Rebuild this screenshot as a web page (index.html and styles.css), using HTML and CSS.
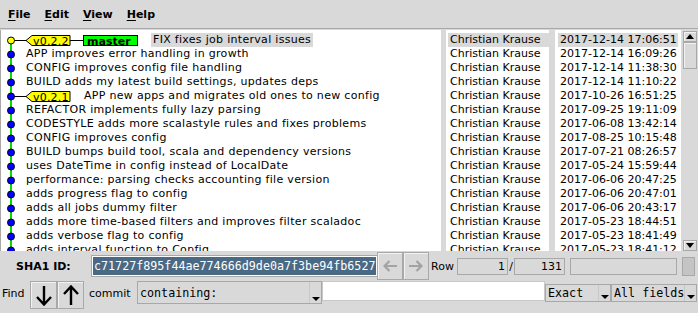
FILE: index.html
```html
<!DOCTYPE html>
<html lang="en">
<head>
    <meta charset="UTF-8">
    <title>gitk: jobs</title>
    <link rel="stylesheet" href="styles.css">
</head>
<body>
    <div class="menubar">
        <span class="menu"><u>F</u>ile</span>
        <span class="menu"><u>E</u>dit</span>
        <span class="menu"><u>V</u>iew</span>
        <span class="menu"><u>H</u>elp</span>
    </div>

    <div class="main">
        <section class="pane graph-pane">
            <div class="row">
                <svg class="graph" width="149" height="14">
                    <rect class="edge" x="9" y="7" width="2" height="7"/>
                    <line class="link" x1="13" y1="7.5" x2="26" y2="7.5"/>
                    <polygon class="tag" points="25,7.5 31,2.5 69,2.5 69,12.5 31,12.5"/>
                    <text class="tag-text" x="32" y="11.5">v0.2.2</text>
                    <line class="link" x1="69" y1="7.5" x2="83" y2="7.5"/>
                    <rect class="head" x="82.5" y="2.5" width="54" height="10"/>
                    <text class="head-text" x="86" y="11.5">master</text>
                    <circle class="dot current" cx="10" cy="7.5" r="3.5"/>
                </svg>
                <span class="msg selected">FIX fixes job interval issues</span>
            </div>
            <div class="row"><svg class="graph" width="24" height="14"><rect class="edge" x="9" y="0" width="2" height="14"/><circle class="dot" cx="10" cy="7.5" r="3.5"/></svg><span class="msg">APP improves error handling in growth</span></div>
            <div class="row"><svg class="graph" width="24" height="14"><rect class="edge" x="9" y="0" width="2" height="14"/><circle class="dot" cx="10" cy="7.5" r="3.5"/></svg><span class="msg">CONFIG improves config file handling</span></div>
            <div class="row"><svg class="graph" width="24" height="14"><rect class="edge" x="9" y="0" width="2" height="14"/><circle class="dot" cx="10" cy="7.5" r="3.5"/></svg><span class="msg">BUILD adds my latest build settings, updates deps</span></div>
            <div class="row">
                <svg class="graph" width="82" height="14">
                    <rect class="edge" x="9" y="0" width="2" height="14"/>
                    <line class="link" x1="13" y1="7.5" x2="26" y2="7.5"/>
                    <polygon class="tag" points="25,7.5 31,2.5 69,2.5 69,12.5 31,12.5"/>
                    <text class="tag-text" x="32" y="11.5">v0.2.1</text>
                    <circle class="dot" cx="10" cy="7.5" r="3.5"/>
                </svg>
                <span class="msg">APP new apps and migrates old ones to new config</span>
            </div>
            <div class="row"><svg class="graph" width="24" height="14"><rect class="edge" x="9" y="0" width="2" height="14"/><circle class="dot" cx="10" cy="7.5" r="3.5"/></svg><span class="msg">REFACTOR implements fully lazy parsing</span></div>
            <div class="row"><svg class="graph" width="24" height="14"><rect class="edge" x="9" y="0" width="2" height="14"/><circle class="dot" cx="10" cy="7.5" r="3.5"/></svg><span class="msg">CODESTYLE adds more scalastyle rules and fixes problems</span></div>
            <div class="row"><svg class="graph" width="24" height="14"><rect class="edge" x="9" y="0" width="2" height="14"/><circle class="dot" cx="10" cy="7.5" r="3.5"/></svg><span class="msg">CONFIG improves config</span></div>
            <div class="row"><svg class="graph" width="24" height="14"><rect class="edge" x="9" y="0" width="2" height="14"/><circle class="dot" cx="10" cy="7.5" r="3.5"/></svg><span class="msg">BUILD bumps build tool, scala and dependency versions</span></div>
            <div class="row"><svg class="graph" width="24" height="14"><rect class="edge" x="9" y="0" width="2" height="14"/><circle class="dot" cx="10" cy="7.5" r="3.5"/></svg><span class="msg">uses DateTime in config instead of LocalDate</span></div>
            <div class="row"><svg class="graph" width="24" height="14"><rect class="edge" x="9" y="0" width="2" height="14"/><circle class="dot" cx="10" cy="7.5" r="3.5"/></svg><span class="msg">performance: parsing checks accounting file version</span></div>
            <div class="row"><svg class="graph" width="24" height="14"><rect class="edge" x="9" y="0" width="2" height="14"/><circle class="dot" cx="10" cy="7.5" r="3.5"/></svg><span class="msg">adds progress flag to config</span></div>
            <div class="row"><svg class="graph" width="24" height="14"><rect class="edge" x="9" y="0" width="2" height="14"/><circle class="dot" cx="10" cy="7.5" r="3.5"/></svg><span class="msg">adds all jobs dummy filter</span></div>
            <div class="row"><svg class="graph" width="24" height="14"><rect class="edge" x="9" y="0" width="2" height="14"/><circle class="dot" cx="10" cy="7.5" r="3.5"/></svg><span class="msg">adds more time-based filters and improves filter scaladoc</span></div>
            <div class="row"><svg class="graph" width="24" height="14"><rect class="edge" x="9" y="0" width="2" height="14"/><circle class="dot" cx="10" cy="7.5" r="3.5"/></svg><span class="msg">adds verbose flag to config</span></div>
            <div class="row"><svg class="graph" width="24" height="14"><rect class="edge" x="9" y="0" width="2" height="14"/><circle class="dot" cx="10" cy="7.5" r="3.5"/></svg><span class="msg">adds interval function to Config</span></div>
        </section>

        <section class="pane author-pane">
            <div class="row"><span class="cell selected">Christian Krause</span></div>
            <div class="row"><span class="cell">Christian Krause</span></div>
            <div class="row"><span class="cell">Christian Krause</span></div>
            <div class="row"><span class="cell">Christian Krause</span></div>
            <div class="row"><span class="cell">Christian Krause</span></div>
            <div class="row"><span class="cell">Christian Krause</span></div>
            <div class="row"><span class="cell">Christian Krause</span></div>
            <div class="row"><span class="cell">Christian Krause</span></div>
            <div class="row"><span class="cell">Christian Krause</span></div>
            <div class="row"><span class="cell">Christian Krause</span></div>
            <div class="row"><span class="cell">Christian Krause</span></div>
            <div class="row"><span class="cell">Christian Krause</span></div>
            <div class="row"><span class="cell">Christian Krause</span></div>
            <div class="row"><span class="cell">Christian Krause</span></div>
            <div class="row"><span class="cell">Christian Krause</span></div>
            <div class="row"><span class="cell">Christian Krause</span></div>
        </section>

        <section class="pane date-pane">
            <div class="row"><span class="cell selected">2017-12-14 17:06:51</span></div>
            <div class="row"><span class="cell">2017-12-14 16:09:26</span></div>
            <div class="row"><span class="cell">2017-12-14 11:38:30</span></div>
            <div class="row"><span class="cell">2017-12-14 11:10:22</span></div>
            <div class="row"><span class="cell">2017-10-26 16:51:25</span></div>
            <div class="row"><span class="cell">2017-09-25 19:11:09</span></div>
            <div class="row"><span class="cell">2017-06-08 13:42:14</span></div>
            <div class="row"><span class="cell">2017-08-25 10:15:48</span></div>
            <div class="row"><span class="cell">2017-07-21 08:26:57</span></div>
            <div class="row"><span class="cell">2017-05-24 15:59:44</span></div>
            <div class="row"><span class="cell">2017-06-06 20:47:25</span></div>
            <div class="row"><span class="cell">2017-06-06 20:47:01</span></div>
            <div class="row"><span class="cell">2017-06-06 20:43:17</span></div>
            <div class="row"><span class="cell">2017-05-23 18:44:51</span></div>
            <div class="row"><span class="cell">2017-05-23 18:41:49</span></div>
            <div class="row"><span class="cell">2017-05-23 18:41:12</span></div>
        </section>

        <div class="scrollbar">
            <div class="sb-btn"><svg width="8" height="5"><polygon points="0,5 4,0 8,5"/></svg></div>
            <div class="sb-trough"><div class="sb-thumb"></div></div>
            <div class="sb-btn"><svg width="8" height="5"><polygon points="0,0 8,0 4,5"/></svg></div>
        </div>
    </div>

    <div class="idbar">
        <span class="idlabel">SHA1 ID:</span>
        <div class="sha-entry"><span class="sha-text">c71727f895f44ae774666d9de0a7f3be94fb6527</span></div>
        <button class="nav" disabled>
            <svg width="16" height="12"><path d="M15 6H2.5M7.5 1L2.5 6l5 5" fill="none" stroke="#a3a3a3" stroke-width="2.2"/></svg>
        </button>
        <button class="nav" disabled>
            <svg width="16" height="12"><path d="M1 6h12.5M8.5 1l5 5-5 5" fill="none" stroke="#a3a3a3" stroke-width="2.2"/></svg>
        </button>
        <span class="rowlabel">Row</span>
        <div class="num">1</div>
        <span class="slash">/</span>
        <div class="num">131</div>
        <div class="status"></div>
        <div class="stub"></div>
    </div>

    <div class="findbar">
        <span class="findlabel">Find</span>
        <button class="fbtn">
            <svg width="18" height="21"><path d="M9 1v18.5M2 12l7 7.5 7-7.5" fill="none" stroke="#000" stroke-width="2.4"/></svg>
        </button>
        <button class="fbtn">
            <svg width="18" height="21"><path d="M9 20V1.5M2 9l7-7.5 7 7.5" fill="none" stroke="#000" stroke-width="2.4"/></svg>
        </button>
        <span class="commitlabel">commit</span>
        <div class="combo combo-type"><span class="combo-text">containing:</span><span class="combo-arrow"></span></div>
        <div class="find-entry"></div>
        <div class="combo combo-exact"><span class="combo-text">Exact</span><span class="combo-arrow"></span></div>
        <div class="combo combo-fields"><span class="combo-text">All fields</span><span class="combo-arrow"></span></div>
    </div>
</body>
</html>
```

FILE: styles.css
```css
* { margin: 0; padding: 0; box-sizing: border-box; }
body {
    font: 11px "DejaVu Sans", sans-serif;
    color: #000;
    background: #d9d9d9;
    width: 698px;
    height: 313px;
    overflow: hidden;
}
button { font: inherit; }

/* menu */
.menubar{
    height: 28px;
    display: flex;
    align-items: center;
    padding-left: 8px;
    gap: 14px;
    font-weight: bold;
}
.menu u{
    text-decoration-thickness: 1px;
    text-underline-offset: 2px;
}

/* commit list */
.main{
    height: 223px;
    display: flex;
    border-top: 1px solid #a8a8a8;
    padding-top: 1px;
}
.pane{
    background: #fff;
    height: 221px;
    overflow: hidden;
    padding-top: 3px;
}
.graph-pane{
    width: 441px;
    border-left: 1px solid #a8a8a8;
}
.author-pane{
    width: 103px;
    margin-left: 5px;
}
.date-pane{
    width: 126px;
    margin-left: 6px;
}
.row{
    height: 14px;
    display: flex;
    align-items: center;
    white-space: nowrap;
}
.graph{
    display: block;
    flex: none;
}
.edge{ fill: #00e000; }
.link{ stroke: #000; stroke-width: 1; }
.dot{ fill: #0000ff; stroke: #000; stroke-width: 1; }
.dot.current{ fill: #ffff00; }
.tag{ fill: #ffff00; stroke: #000; stroke-width: 1; }
.tag-text{ font: 11px "DejaVu Sans", sans-serif; letter-spacing: 0.2px; }
.head{ fill: #00ff00; stroke: #000; stroke-width: 1; }
.head-text{ font: bold 11px "DejaVu Sans", sans-serif; }
.msg{
    line-height: 14px;
    padding-left: 1px;
    letter-spacing: 0.3px;
}
.msg.selected{
    margin-left: 1px;
    padding: 0 2px 0 2px;
    background: #d9d9d9;
}
.author-pane .cell{
    display: block;
    width: 101px;
    margin-left: 2px;
    padding-left: 2px;
    line-height: 14px;
}
.date-pane .cell{
    display: block;
    width: 120px;
    margin-left: 3px;
    padding-left: 2px;
    line-height: 14px;
}
.cell.selected{ background: #d9d9d9; }

.scrollbar{
    width: 17px;
    height: 222px;
    display: flex;
    flex-direction: column;
    padding: 1px 1px 1px 2px;
}
.sb-btn{
    height: 11px;
    display: flex;
    align-items: center;
    justify-content: center;
    border: 1px solid #a8a8a8;
    box-shadow: inset 1px 1px #f2f2f2;
}
.sb-btn svg{ display: block; }
.sb-trough{
    flex: 1;
    padding-bottom: 2px;
}
.sb-thumb{
    height: 27px;
    border: 1px solid #a8a8a8;
    box-shadow: inset 1px 1px #f2f2f2;
}

/* sha1 row */
.idbar{
    height: 30px;
    display: flex;
    align-items: center;
}
.idlabel{
    font-weight: bold;
    margin-left: 16px;
    width: 75px;
}
.sha-entry{
    width: 286px;
    height: 22px;
    border: 1px solid #a8a8a8;
    border-right: none;
    padding: 1px 0 1px 1px;
    overflow: hidden;
    white-space: nowrap;
    background: #fff;
}
.sha-text{
    display: inline-block;
    font: 11.7px "DejaVu Sans Mono", monospace;
    line-height: 18px;
    padding: 0 1px;
    color: #fff;
    background: #4a6984;
}
.nav{
    width: 26px;
    height: 28px;
    display: flex;
    align-items: center;
    justify-content: center;
    background: #d9d9d9;
    border: 1px solid #a8a8a8;
    box-shadow: inset 1px 1px #f2f2f2;
}
.rowlabel{ margin-left: 2px; width: 26px; }
.num{
    width: 51px;
    height: 17px;
    line-height: 15px;
    border: 1px solid #a8a8a8;
    text-align: right;
    padding-right: 2px;
}
.slash{ width: 6px; text-align: center; }
.status{
    width: 107px;
    height: 17px;
    margin-left: 5px;
    border: 1px solid #a8a8a8;
}
.stub{
    width: 13px;
    height: 19px;
    margin-left: 5px;
    background: #c4c4c4;
    border: 1px solid #a8a8a8;
}

/* find row */
.findbar{
    height: 32px;
    display: flex;
    align-items: flex-start;
}
.findlabel{
    margin-left: 2px;
    width: 28px;
    line-height: 25px;
}
.fbtn{
    width: 27px;
    height: 28px;
    display: flex;
    align-items: center;
    justify-content: center;
    background: #d9d9d9;
    border: 1px solid #a8a8a8;
    box-shadow: inset 1px 1px #f2f2f2;
}
.commitlabel{
    margin-left: 5px;
    width: 48px;
    line-height: 25px;
}
.combo{
    display: flex;
    align-items: stretch;
    border: 1px solid #a8a8a8;
    background: #d9d9d9;
    font: 11.7px "DejaVu Sans Mono", monospace;
}
.combo-text{
    flex: 1;
    padding-left: 2px;
    display: flex;
    align-items: center;
    white-space: nowrap;
    overflow: hidden;
}
.combo-arrow{
    width: 12px;
    position: relative;
    border-left: 1px solid #c8c8c8;
}
.combo-arrow::after{
    content: '';
    position: absolute;
    left: 2px;
    bottom: 2px;
    border-left: 4px solid transparent;
    border-right: 4px solid transparent;
    border-top: 4px solid #000;
}
.combo-type{
    width: 185px;
    height: 23px;
}
.find-entry{
    width: 223px;
    height: 20px;
    background: #fff;
    border: 1px solid #c8c8c8;
}
.combo-exact{
    width: 66px;
    height: 18px;
    margin-top: 3px;
}
.combo-fields{
    width: 86px;
    height: 18px;
    margin-top: 3px;
}
```
